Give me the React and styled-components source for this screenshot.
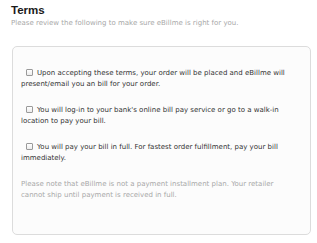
import React from 'react'
import styled, { createGlobalStyle } from 'styled-components'

const GlobalStyle = createGlobalStyle`
    html, body {
        margin: 0;
        padding: 0;
        background: #fff;
    }
    body {
        font-family: "DejaVu Sans", Verdana, sans-serif;
    }
`

const terms = [
    'Upon accepting these terms, your order will be placed and eBillme will present/email you an bill for your order.',
    "You will log-in to your bank's online bill pay service or go to a walk-in location to pay your bill.",
    'You will pay your bill in full. For fastest order fulfillment, pay your bill immediately.',
]

export default function App() {
    return (
        <Page>
            <GlobalStyle />
            <Title>Terms</Title>
            <Subtitle>Please review the following to make sure eBillme is right for you.</Subtitle>

            <Panel>
                {terms.map((t, i) => (
                    <Term key={i}>
                        <Check />
                        {t}
                    </Term>
                ))}
                <Note>
                    Please note that eBillme is not a payment installment plan. Your retailer cannot ship until payment is received in full.
                </Note>
            </Panel>
        </Page>
    )
}

const Page = styled.div`
    width: 317px;
    height: 243px;
    padding: 4px 6px 0 11px;
    box-sizing: border-box;
`

const Title = styled.h1`
    margin: 0;
    font-family: "Liberation Sans", Arial, sans-serif;
    font-size: 11.5px;
    line-height: 13px;
    font-weight: bold;
    color: #1a1a1a;
`

const Subtitle = styled.div`
    margin-top: 2px;
    font-size: 7px;
    line-height: 8px;
    color: #a8a8a8;
`

const Panel = styled.div`
    margin-top: 19px;
    margin-left: 1px;
    height: 189px;
    box-sizing: border-box;
    border: 1px solid #dcdcdc;
    border-radius: 5px;
    background: #fcfcfc;
    padding: 21px 16px 0 8px;
`

const Term = styled.p`
    margin: 0 0 15px 0;
    font-size: 7px;
    line-height: 11px;
    color: #333;
`

const Check = styled.span`
    display: inline-block;
    width: 5px;
    height: 5px;
    margin: 0 4px 0 5px;
    vertical-align: -0.5px;
    border: 1px solid #9a9a9a;
    border-radius: 1px;
    background: linear-gradient(#fff, #ececec);
`

const Note = styled.p`
    margin: 0;
    font-size: 7px;
    line-height: 11px;
    color: #a8a8a8;
`
